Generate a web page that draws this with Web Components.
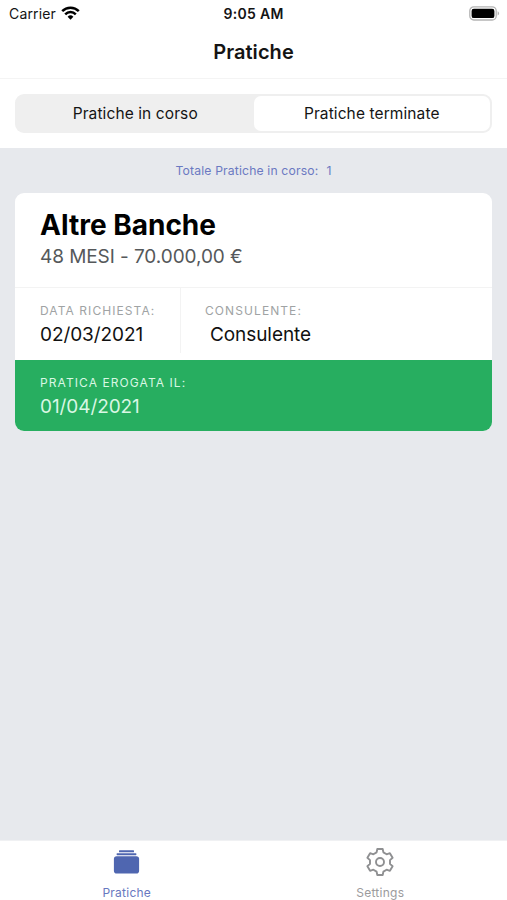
<!DOCTYPE html>
<html lang="it">
<head>
<meta charset="utf-8">
<meta name="viewport" content="width=device-width, initial-scale=1">
<title>Pratiche</title>
<style>
    html, body {
        margin: 0;
        height: 100%;
        overflow: hidden;
    }
    body {
        font-family: Inter, "Liberation Sans", sans-serif;
        color: #141414;
    }
</style>
</head>
<body>
<app-screen>
    <status-bar slot="top" carrier="Carrier" time="9:05 AM"></status-bar>
    <nav-header slot="top">Pratiche</nav-header>
    <segment-control slot="top">
        <segment-item>Pratiche in corso</segment-item>
        <segment-item selected>Pratiche terminate</segment-item>
    </segment-control>
    <total-line label="Totale Pratiche in corso:" count="1"></total-line>
    <loan-card>
        <span slot="title">Altre Banche</span>
        <span slot="subtitle">48 MESI - 70.000,00 €</span>
        <info-field label="Data richiesta:">02/03/2021</info-field>
        <info-field class="inset" label="Consulente:">Consulente</info-field>
        <info-field slot="footer" class="light" label="Pratica erogata il:">01/04/2021</info-field>
    </loan-card>
    <tab-bar slot="bottom">
        <tab-item active label="Pratiche">
            <svg width="28" height="28" viewBox="0 0 28 28" fill="currentColor">
                <rect x="6" y="2.3" width="15" height="2" rx=".5"/>
                <rect x="3.6" y="5.2" width="19.8" height="2" rx=".6"/>
                <rect x=".9" y="8.2" width="25.2" height="17.3" rx="2.8"/>
            </svg>
        </tab-item>
        <tab-item label="Settings">
            <svg width="28" height="28" viewBox="0 0 28 28" fill="none" stroke="currentColor" stroke-width="1.9" stroke-linejoin="round">
                <path d="M11.3 1H16.7L17.4 4.4L20.6 6.3L23.9 5.2L26.6 9.8L24 12.1V15.9L26.6 18.2L23.9 22.8L20.6 21.7L17.4 23.6L16.7 27H11.3L10.6 23.6L7.4 21.7L4.1 22.8L1.4 18.2L4 15.9V12.1L1.4 9.8L4.1 5.2L7.4 6.3L10.6 4.4Z"/>
                <circle cx="14" cy="14" r="4"/>
            </svg>
        </tab-item>
    </tab-bar>
</app-screen>

<script>
/**
 * Base class: renders the element's markup into an open shadow root
 */
class BaseElement extends HTMLElement {
    constructor() {
        super();
        this.attachShadow({ mode: 'open' });
    }

    connectedCallback() {
        this.shadowRoot.innerHTML = this.render();
    }
}

// Full height screen with fixed top and bottom areas
class AppScreen extends BaseElement {
    render() {
        return `
            <style>
                :host {
                    display: flex;
                    flex-direction: column;
                    height: 100vh;
                    background: #e7e9ed;
                }
                header, footer {
                    flex: none;
                    background: #fff;
                }
                main {
                    flex: 1;
                    min-height: 0;
                    padding: 0 15px;
                }
            </style>
            <header><slot name="top"></slot></header>
            <main><slot></slot></main>
            <footer><slot name="bottom"></slot></footer>
        `;
    }
}

class StatusBar extends BaseElement {
    render() {
        return `
            <style>
                :host {
                    display: grid;
                    grid-template-columns: 1fr auto 1fr;
                    align-items: center;
                    height: 27px;
                    padding: 0 7px 0 9px;
                    box-sizing: border-box;
                    font-size: 14px;
                }
                .left {
                    display: flex;
                    align-items: center;
                    gap: 5px;
                    letter-spacing: 0.15px;
                }
                .time {
                    margin-right: 2px;
                    font-weight: 600;
                    letter-spacing: 0.3px;
                }
                .battery {
                    justify-self: end;
                    margin-top: -1px;
                }
                svg {
                    display: block;
                }
                .left svg {
                    margin-top: -1px;
                }
            </style>
            <div class="left">
                <span>${this.getAttribute('carrier')}</span>
                <svg width="19" height="14" viewBox="0 0 19 14" fill="none" stroke="#000" stroke-width="2.5">
                    <path d="M1.2 5.2a11.7 11.7 0 0 1 16.6 0M4.2 8.3a7.5 7.5 0 0 1 10.6 0"/>
                    <path d="M9.5 13.7 6.6 10.8a4.1 4.1 0 0 1 5.8 0z" fill="#000" stroke="none"/>
                </svg>
            </div>
            <div class="time">${this.getAttribute('time')}</div>
            <svg class="battery" width="31" height="15" viewBox="0 0 31 15">
                <rect x=".8" y=".8" width="26.4" height="13.2" rx="4" fill="#fff" stroke="#b4b4b4" stroke-width="1.3"/>
                <rect x="2.6" y="2.7" width="22.8" height="9.4" rx="2.2" fill="#000"/>
                <path d="M28.6 5.2a2.4 2.4 0 0 1 0 4.4z" fill="#b4b4b4"/>
            </svg>
        `;
    }
}

class NavHeader extends BaseElement {
    render() {
        return `
            <style>
                :host {
                    display: flex;
                    justify-content: center;
                    align-items: center;
                    height: 52px;
                    padding-bottom: 1px;
                    box-sizing: border-box;
                    border-bottom: 1px solid #f4f4f4;
                    font-size: 20px;
                    font-weight: 600;
                    letter-spacing: 0.05px;
                }
            </style>
            <slot></slot>
        `;
    }
}

class SegmentControl extends BaseElement {
    render() {
        return `
            <style>
                :host {
                    display: block;
                    padding: 15px 15px 15px;
                }
                .track {
                    display: grid;
                    grid-template-columns: 1fr 1fr;
                    height: 39px;
                    box-sizing: border-box;
                    padding: 2px;
                    border-radius: 9px;
                    background: #efefef;
                }
            </style>
            <div class="track"><slot></slot></div>
        `;
    }
}

class SegmentItem extends BaseElement {
    render() {
        return `
            <style>
                :host {
                    display: flex;
                    justify-content: center;
                    align-items: center;
                    border-radius: 7px;
                    font-size: 15.5px;
                    letter-spacing: 0.1px;
                }
                :host([selected]) {
                    background: #fff;
                }
            </style>
            <slot></slot>
        `;
    }
}

class TotalLine extends BaseElement {
    render() {
        return `
            <style>
                :host {
                    display: flex;
                    justify-content: center;
                    align-items: center;
                    gap: 8px;
                    height: 45px;
                    padding-bottom: 1px;
                    box-sizing: border-box;
                    font-size: 12.2px;
                    color: #6b79c2;
                    letter-spacing: 0.15px;
                }
            </style>
            <span>${this.getAttribute('label')}</span>
            <span>${this.getAttribute('count')}</span>
        `;
    }
}

class LoanCard extends BaseElement {
    render() {
        return `
            <style>
                :host {
                    display: block;
                    overflow: hidden;
                    border-radius: 9px;
                    background: #fff;
                }
                .head {
                    height: 95px;
                    box-sizing: border-box;
                    padding: 14px 25px 0;
                    border-bottom: 1px solid #f3f3f3;
                }
                .title {
                    font-size: 28px;
                    line-height: 36px;
                    font-weight: 700;
                    color: #000;
                }
                .subtitle {
                    font-size: 19px;
                    line-height: 27px;
                    letter-spacing: -0.07px;
                    color: #55585a;
                }
                .fields {
                    display: grid;
                    grid-template-columns: 165px 1fr;
                    height: 72px;
                }
                .fields ::slotted(*) {
                    margin-bottom: 7px;
                    padding: 14px 0 0 25px;
                }
                .fields ::slotted(.inset) {
                    border-left: 1px solid #f3f3f3;
                    padding-left: 24px;
                }
                .footer {
                    height: 71px;
                    box-sizing: border-box;
                    padding: 14px 25px 0;
                    background: #27ae60;
                }
            </style>
            <div class="head">
                <div class="title"><slot name="title"></slot></div>
                <div class="subtitle"><slot name="subtitle"></slot></div>
            </div>
            <div class="fields"><slot></slot></div>
            <div class="footer"><slot name="footer"></slot></div>
        `;
    }
}

class InfoField extends BaseElement {
    render() {
        return `
            <style>
                :host {
                    display: block;
                }
                .label {
                    font-size: 12px;
                    line-height: 18px;
                    letter-spacing: 1.08px;
                    text-transform: uppercase;
                    color: #a0a3a4;
                }
                .value {
                    font-size: 19px;
                    line-height: 29px;
                    letter-spacing: -0.08px;
                    color: #111;
                }
                :host(.inset) .value {
                    padding-left: 5px;
                }
                :host(.light) .label,
                :host(.light) .value {
                    color: #d9f7e4;
                }
            </style>
            <div class="label">${this.getAttribute('label')}</div>
            <div class="value"><slot></slot></div>
        `;
    }
}

class TabBar extends BaseElement {
    render() {
        return `
            <style>
                :host {
                    display: grid;
                    grid-template-columns: 1fr 1fr;
                    height: 60px;
                    box-sizing: border-box;
                    border-top: 1px solid #f0f1f3;
                }
            </style>
            <slot></slot>
        `;
    }
}

class TabItem extends BaseElement {
    render() {
        return `
            <style>
                :host {
                    display: flex;
                    flex-direction: column;
                    align-items: center;
                    padding-top: 7px;
                    color: #8f9092;
                }
                :host([active]) {
                    color: #4f66b0;
                }
                ::slotted(svg) {
                    display: block;
                }
                .label {
                    margin-top: 9px;
                    font-size: 12px;
                    line-height: 16px;
                    letter-spacing: 0.25px;
                    color: #9b9b9d;
                }
                :host([active]) .label {
                    color: #6878c0;
                }
            </style>
            <slot></slot>
            <span class="label">${this.getAttribute('label')}</span>
        `;
    }
}

// Register web components
customElements.define('app-screen', AppScreen);
customElements.define('status-bar', StatusBar);
customElements.define('nav-header', NavHeader);
customElements.define('segment-control', SegmentControl);
customElements.define('segment-item', SegmentItem);
customElements.define('total-line', TotalLine);
customElements.define('loan-card', LoanCard);
customElements.define('info-field', InfoField);
customElements.define('tab-bar', TabBar);
customElements.define('tab-item', TabItem);
</script>
</body>
</html>
